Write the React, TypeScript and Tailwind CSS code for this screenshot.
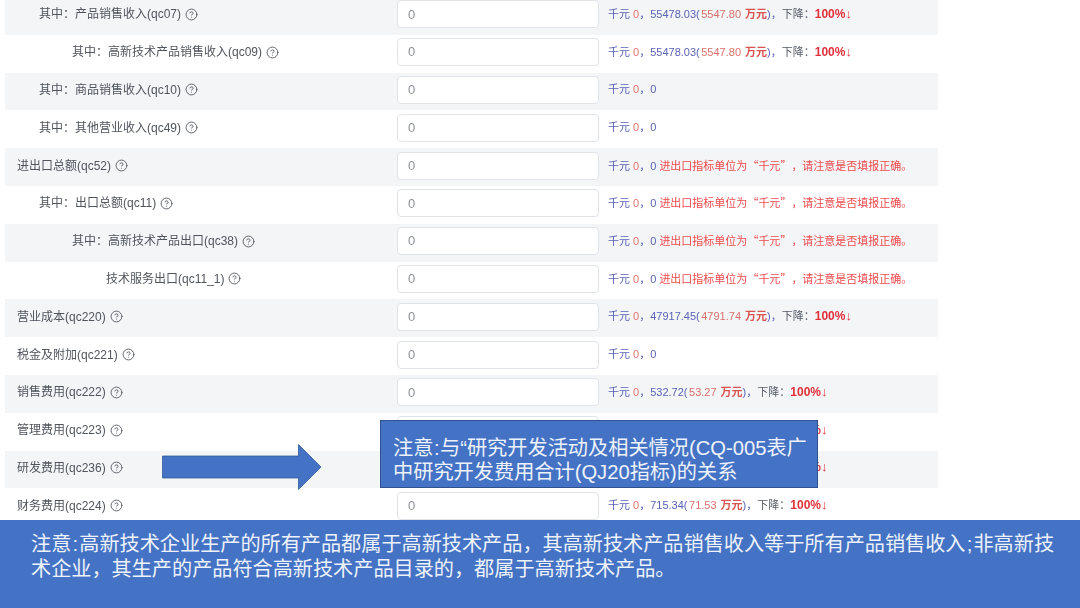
import { CircleHelp } from "lucide-react";

type Msg =
  | { kind: "plain" }
  | { kind: "warn" }
  | { kind: "drop"; prev: string; wan: string };

const rows: { label: string; indent: string; msg: Msg }[] = [
  { label: "其中：产品销售收入(qc07)", indent: "pl-[34px]", msg: { kind: "drop", prev: "55478.03", wan: "5547.80" } },
  { label: "其中：高新技术产品销售收入(qc09)", indent: "pl-[67px]", msg: { kind: "drop", prev: "55478.03", wan: "5547.80" } },
  { label: "其中：商品销售收入(qc10)", indent: "pl-[34px]", msg: { kind: "plain" } },
  { label: "其中：其他营业收入(qc49)", indent: "pl-[34px]", msg: { kind: "plain" } },
  { label: "进出口总额(qc52)", indent: "pl-[12px]", msg: { kind: "warn" } },
  { label: "其中：出口总额(qc11)", indent: "pl-[34px]", msg: { kind: "warn" } },
  { label: "其中：高新技术产品出口(qc38)", indent: "pl-[67px]", msg: { kind: "warn" } },
  { label: "技术服务出口(qc11_1)", indent: "pl-[101px]", msg: { kind: "warn" } },
  { label: "营业成本(qc220)", indent: "pl-[12px]", msg: { kind: "drop", prev: "47917.45", wan: "4791.74" } },
  { label: "税金及附加(qc221)", indent: "pl-[12px]", msg: { kind: "plain" } },
  { label: "销售费用(qc222)", indent: "pl-[12px]", msg: { kind: "drop", prev: "532.72", wan: "53.27" } },
  { label: "管理费用(qc223)", indent: "pl-[12px]", msg: { kind: "drop", prev: "532.72", wan: "53.27" } },
  { label: "研发费用(qc236)", indent: "pl-[12px]", msg: { kind: "drop", prev: "532.72", wan: "53.27" } },
  { label: "财务费用(qc224)", indent: "pl-[12px]", msg: { kind: "drop", prev: "715.34", wan: "71.53" } },
];

function Message({ msg }: { msg: Msg }) {
  return (
    <span className="whitespace-nowrap text-[11px] leading-[16px] text-[#5b62b4]">
      千元 <span className="text-[#e0736f]">0</span>，
      {msg.kind === "plain" && "0"}
      {msg.kind === "warn" && (
        <>
          0{" "}
          <span className="text-[#ef4a4a]">
            进出口指标单位为
            <span className="font-['Noto_Sans_CJK_SC']">“</span>千元<span className="font-['Noto_Sans_CJK_SC']">”</span>
            ，请注意是否填报正确。
          </span>
        </>
      )}
      {msg.kind === "drop" && (
        <>
          {msg.prev}(<span className="pl-[1.5px] pr-[1px] text-[#d9706c]">{msg.wan} </span>
          <span className="font-bold text-[#d9534f]">万元</span>)，
          <span className="text-[#555a66]">下降：</span>
          <span className="text-[12px] font-bold text-[#e0303a]">100%</span>
          <span className="text-[13px] text-[#e0303a]">↓</span>
        </>
      )}
    </span>
  );
}

export default function App() {
  return (
    <div
      className="relative h-[608px] w-[1080px] overflow-hidden bg-white [text-spacing-trim:space-all]"
      style={{ fontFamily: '"Liberation Sans", "Noto Sans CJK SC", sans-serif' }}
    >
      <div className="ml-[5px] -mt-[3px] w-[933px] blur-[0.4px]">
        {rows.map((r, i) => (
          <div
            key={r.label}
            className={`flex h-[37.8px] items-center pb-[3px] ${i % 2 === 0 ? "bg-[#f3f5f7]" : "bg-white"}`}
          >
            <div className={`flex w-[392px] shrink-0 items-center gap-[4px] text-[12px] text-[#50545c] ${r.indent}`}>
              <span className="whitespace-nowrap">{r.label}</span>
              <CircleHelp size={13} strokeWidth={1.75} className="shrink-0 text-[#5a5e66]" />
            </div>
            <div className="flex h-[28px] w-[202px] shrink-0 items-center rounded-[4px] border border-[#e0e3e9] bg-white pl-[10px] text-[13px] text-[#8f9298]">
              0
            </div>
            <div className="ml-[9px] mb-[1px] flex items-center">
              <Message msg={r.msg} />
            </div>
          </div>
        ))}
      </div>

      <svg className="absolute left-[162px] top-[444px]" width="160" height="46" viewBox="0 0 160 46">
        <path d="M0.5 12H136.5V0.5L159 23L136.5 45.5V34H0.5Z" fill="#4472c4" stroke="#2f5597" strokeWidth="0.75" />
      </svg>

      <div className="absolute left-[380px] top-[420px] h-[68px] w-[438px] border border-[#2f528f] bg-[#4472c4] pl-[12px] pt-[15px] text-[20.2px] leading-[24px] text-[#eef2fa]">
        注意<span className="px-[0.5px]">:</span>与“研究开发活动及相关情况(CQ-005表广
        <br />
        中研究开发费用合计(QJ20指标)的关系
      </div>

      <div className="absolute bottom-0 left-0 h-[88px] w-[1080px] bg-[#4472c4] pl-[31px] pt-[12px] text-[20.15px] leading-[25px] text-[#eef2fa]">
        注意<span className="px-[1.2px]">:</span>高新技术企业生产的所有产品都属于高新技术产品，其高新技术产品销售收入等于所有产品销售收入<span className="px-[1.2px]">;</span>非高新技
        <br />
        术企业，其生产的产品符合高新技术产品目录的，都属于高新技术产品。
      </div>
    </div>
  );
}
